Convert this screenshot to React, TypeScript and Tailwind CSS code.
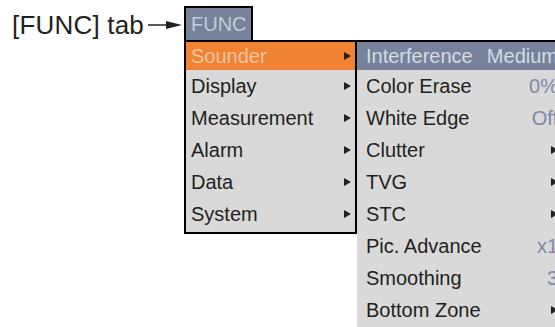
import React from 'react';

type SubItem = { label: string; value?: string; arrow?: boolean };

const mainItems = ['Sounder', 'Display', 'Measurement', 'Alarm', 'Data', 'System'];

const subItems: SubItem[] = [
  { label: 'Color Erase', value: '0%' },
  { label: 'White Edge', value: 'Off' },
  { label: 'Clutter', arrow: true },
  { label: 'TVG', arrow: true },
  { label: 'STC', arrow: true },
  { label: 'Pic. Advance', value: 'x1' },
  { label: 'Smoothing', value: '3' },
  { label: 'Bottom Zone', arrow: true },
];

function Caret() {
  return (
    <svg width="7" height="8" viewBox="0 0 7 8" className="shrink-0">
      <path d="M0 0 L7 4 L0 8 Z" fill="#231f20" />
    </svg>
  );
}

export default function App() {
  return (
    <div className="w-[555px] h-[327px] overflow-hidden bg-white flex items-start font-['Liberation_Sans',Arial,sans-serif]">
      {/* Callout label */}
      <div className="w-[172px] ml-[12px] mt-[7px] h-[36px] flex items-center shrink-0">
        <span className="text-[26px] leading-none text-[#231f20] whitespace-nowrap tracking-[0.2px]">[FUNC] tab</span>
        <svg width="36" height="12" viewBox="0 0 36 12" className="ml-[4px]">
          <line x1="0" y1="6" x2="22" y2="6" stroke="#231f20" strokeWidth="1.5" />
          <path d="M18 2 L34 6 L18 10 Z" fill="#231f20" />
        </svg>
      </div>

      {/* Menu stack */}
      <div className="mt-[6px] flex flex-col shrink-0">
        <div className="w-[69px] h-[34px] shrink-0 border-2 border-b-0 border-black bg-[#76839b] flex items-center pl-[5px]">
          <span className="text-[20px] leading-none text-[#c3cad8]">FUNC</span>
        </div>

        <div className="flex items-start shrink-0">
          {/* Main menu */}
          <div className="w-[173px] shrink-0 border-2 border-black bg-[#d9d9d9] flex flex-col pb-[2px]">
            {mainItems.map((item, i) => (
              <div
                key={item}
                className={
                  i === 0
                    ? 'h-[28px] flex items-center justify-between pl-[5px] pr-[4px] bg-[#f08233]'
                    : 'h-[32px] flex items-center justify-between pl-[5px] pr-[4px]'
                }
              >
                <span
                  className={
                    i === 0
                      ? 'text-[20px] leading-none text-[#f2c4a4]'
                      : 'text-[20px] leading-none text-[#231f20]'
                  }
                >
                  {item}
                </span>
                <Caret />
              </div>
            ))}
          </div>

          {/* Sub menu */}
          <div className="w-[208px] shrink-0 h-[300px] border-2 border-l-0 border-black bg-[#d9d9d9] flex flex-col">
            <div className="h-[28px] shrink-0 flex items-center justify-between pl-[9px] pr-[5px] bg-[#76839b]">
              <span className="text-[20px] leading-none text-[#d6dae3]">Interference</span>
              <span className="text-[20px] leading-none text-[#d6dae3]">Medium</span>
            </div>
            {subItems.map((s) => (
              <div key={s.label} className="h-[32px] shrink-0 flex items-center justify-between pl-[9px] pr-[5px]">
                <span className="text-[20px] leading-none text-[#231f20]">{s.label}</span>
                {s.arrow ? (
                  <Caret />
                ) : (
                  <span className="text-[20px] leading-none text-[#7d8aa6]">{s.value}</span>
                )}
              </div>
            ))}
          </div>
        </div>
      </div>
    </div>
  );
}
